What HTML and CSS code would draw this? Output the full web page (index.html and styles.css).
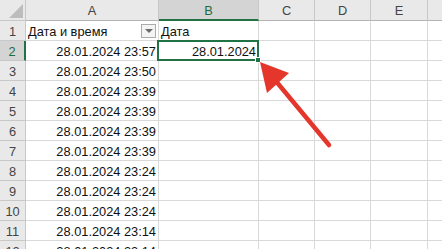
FILE: index.html
```html
<!DOCTYPE html>
<html>
<head>
<meta charset="utf-8">
<link rel="stylesheet" href="styles.css">
</head>
<body>
<div class="sheet">
  <div class="grid">
    <div class="hd corner"><span class="tri"></span></div>
    <div class="hd col">A</div>
    <div class="hd col sel">B</div>
    <div class="hd col">C</div>
    <div class="hd col">D</div>
    <div class="hd col">E</div>
    <div class="hd col last"></div>

    <div class="hd row">1</div>
    <div class="c txt">Дата и время<span class="filter"><span class="dd"></span></span></div>
    <div class="c txt">Дата</div>
    <div class="c"></div><div class="c"></div><div class="c"></div><div class="c last"></div>

    <div class="hd row rsel">2</div>
    <div class="c num">28.01.2024 23:57</div>
    <div class="c num">28.01.2024</div>
    <div class="c"></div><div class="c"></div><div class="c"></div><div class="c last"></div>

    <div class="hd row">3</div>
    <div class="c num">28.01.2024 23:50</div>
    <div class="c"></div><div class="c"></div><div class="c"></div><div class="c"></div><div class="c last"></div>

    <div class="hd row">4</div>
    <div class="c num">28.01.2024 23:39</div>
    <div class="c"></div><div class="c"></div><div class="c"></div><div class="c"></div><div class="c last"></div>

    <div class="hd row">5</div>
    <div class="c num">28.01.2024 23:39</div>
    <div class="c"></div><div class="c"></div><div class="c"></div><div class="c"></div><div class="c last"></div>

    <div class="hd row">6</div>
    <div class="c num">28.01.2024 23:39</div>
    <div class="c"></div><div class="c"></div><div class="c"></div><div class="c"></div><div class="c last"></div>

    <div class="hd row">7</div>
    <div class="c num">28.01.2024 23:39</div>
    <div class="c"></div><div class="c"></div><div class="c"></div><div class="c"></div><div class="c last"></div>

    <div class="hd row">8</div>
    <div class="c num">28.01.2024 23:24</div>
    <div class="c"></div><div class="c"></div><div class="c"></div><div class="c"></div><div class="c last"></div>

    <div class="hd row">9</div>
    <div class="c num">28.01.2024 23:24</div>
    <div class="c"></div><div class="c"></div><div class="c"></div><div class="c"></div><div class="c last"></div>

    <div class="hd row">10</div>
    <div class="c num">28.01.2024 23:24</div>
    <div class="c"></div><div class="c"></div><div class="c"></div><div class="c"></div><div class="c last"></div>

    <div class="hd row">11</div>
    <div class="c num">28.01.2024 23:14</div>
    <div class="c"></div><div class="c"></div><div class="c"></div><div class="c"></div><div class="c last"></div>

    <div class="hd row">12</div>
    <div class="c num">28.01.2024 23:14</div>
    <div class="c"></div><div class="c"></div><div class="c"></div><div class="c"></div><div class="c last"></div>
  </div>

  <div class="selbox"><span class="handle"></span></div>

  <svg class="arrow" width="442" height="249" viewBox="0 0 442 249">
    <line x1="329" y1="145" x2="275" y2="80" stroke="#e5362c" stroke-width="4.5" stroke-linecap="round"/>
    <polygon points="260,62 289,73 267,93" fill="#e5362c"/>
  </svg>
</div>
</body>
</html>
```

FILE: styles.css
```css
* { box-sizing: border-box; }
html, body {
  margin: 0;
  padding: 0;
  background: #ffffff;
  overflow: hidden;
}
.sheet {
  position: relative;
  width: 442px;
  height: 249px;
  overflow: hidden;
  font-family: "Liberation Sans", Arial, sans-serif;
  font-size: 12.8px;
  color: #111;
}
.grid {
  display: grid;
  grid-template-columns: 26px 133px 100px 56px 56px 57px 40px;
  grid-template-rows: 21px repeat(12, 20px);
}
.hd {
  background: #e9e9e9;
  color: #444;
  border-right: 1px solid #c8c8c8;
  border-bottom: 1px solid #c8c8c8;
  display: flex;
  align-items: center;
  justify-content: center;
  font-size: 12.8px;
}
.hd.col { border-bottom-color: #b4b4b4; padding-top: 1px; }
.hd.sel {
  background: #d4d4d4;
  color: #1e6b41;
  border-bottom: 2px solid #217346;
}
.hd.row { padding-top: 1px; }
.hd.rsel {
  background: #d4d4d4;
  color: #1e6b41;
  border-right: 2px solid #217346;
}
.corner {
  position: relative;
}
.tri {
  position: absolute;
  right: 2px;
  bottom: 2px;
  width: 0;
  height: 0;
  border-left: 14px solid transparent;
  border-bottom: 14px solid #bdbdbd;
}
.c {
  border-right: 1px solid #d9d9d9;
  border-bottom: 1px solid #d9d9d9;
  display: flex;
  align-items: center;
  padding: 2px 3px 0 3px;
  white-space: nowrap;
  overflow: visible;
}
.c.txt { justify-content: flex-start; position: relative; padding-left: 2px; }
.c.num { justify-content: flex-end; padding-right: 2px; }
.c.last, .hd.last { border-right: none; }
.filter {
  position: absolute;
  right: 2px;
  top: 3px;
  width: 15px;
  height: 14px;
  border: 1px solid #ababab;
  background: #f4f4f4;
  display: flex;
  align-items: center;
  justify-content: center;
}
.dd {
  width: 0;
  height: 0;
  border-left: 4px solid transparent;
  border-right: 4px solid transparent;
  border-top: 4px solid #6a6a6a;
}
.selbox {
  position: absolute;
  left: 157px;
  top: 40px;
  width: 102px;
  height: 21px;
  border: 2px solid #217346;
}
.handle {
  position: absolute;
  right: -4px;
  bottom: -4px;
  width: 6px;
  height: 6px;
  background: #217346;
  border: 1px solid #ffffff;
}
.arrow {
  position: absolute;
  left: 0;
  top: 0;
}
```
